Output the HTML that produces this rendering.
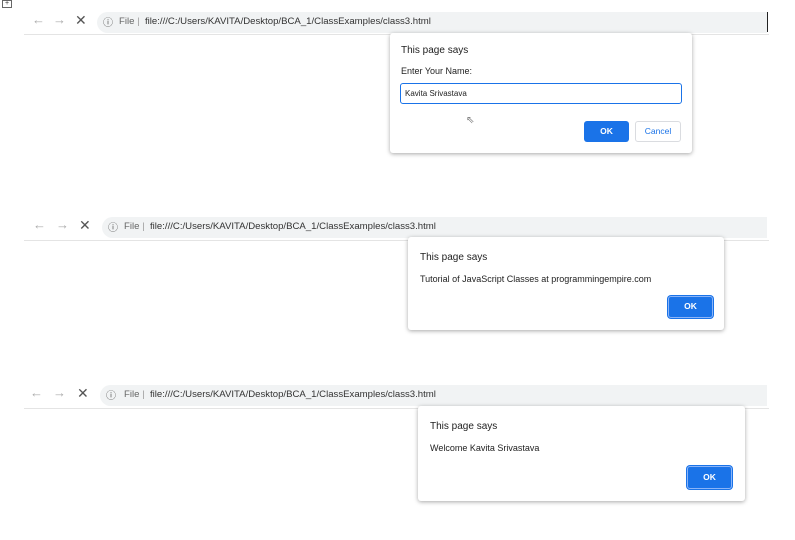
<!DOCTYPE html>
<html><head><meta charset="utf-8"><style>
*{margin:0;padding:0;box-sizing:border-box}
body{width:795px;height:540px;background:#fff;position:relative;overflow:hidden;font-family:"Liberation Sans",sans-serif;color:#333}
.a{position:absolute}
.bar{position:absolute;background:#f1f3f4;border-radius:11px 0 0 11px;height:21px}
.line{position:absolute;height:1px;background:#e4e4e4}
.ic{position:absolute;color:#aaa;font-size:13px;line-height:13px}
.x{color:#555;font-size:14px}
.url{position:absolute;font-size:9.6px;color:#333;white-space:nowrap}
.file{color:#666}
.dlg{position:absolute;background:#fff;border-radius:3px;box-shadow:0 1px 4px rgba(0,0,0,.35)}
.t{position:absolute;font-size:10px;color:#222}
.m{position:absolute;font-size:9px;color:#222}
.ok{position:absolute;background:#1a73e8;color:#fff;font-size:8.5px;font-weight:bold;text-align:center;border-radius:3px}
.ok2{border:1.5px solid #8ab4f8;box-shadow:0 0 0 1px #1a73e8}
</style></head><body>
<div class="a" style="left:2px;top:0;width:10px;height:8px;border:1px solid #666;font-size:7px;line-height:6px;text-align:center">+</div>
<div class="a" style="left:767px;top:12px;width:1px;height:20px;background:#222"></div>

<!-- bar 1 -->
<div class="bar" style="left:97px;top:12px;width:670px"></div>
<div class="line" style="left:24px;top:34px;width:745px"></div>
<div class="ic" style="left:32px;top:13px">←</div>
<div class="ic" style="left:53px;top:13px">→</div>
<div class="ic x" style="left:75px;top:14px">✕</div>
<div class="ic" style="left:103px;top:17px;font-size:10px;color:#555">ⓘ</div>
<div class="url" style="left:119px;top:16px"><span class="file">File</span> <span style="color:#999">|</span>&nbsp; file:///C:/Users/KAVITA/Desktop/BCA_1/ClassExamples/class3.html</div>

<div class="dlg" style="left:390px;top:33px;width:302px;height:120px"></div>
<div class="t" style="left:401px;top:45px">This page says</div>
<div class="m" style="left:401px;top:66px">Enter Your Name:</div>
<div class="a" style="left:400px;top:83px;width:282px;height:21px;border:1.5px solid #1a73e8;border-radius:3px;font-size:8px;padding:5px 0 0 4px;color:#222">Kavita Srivastava</div>
<div class="a" style="left:466px;top:115px;font-size:10px;color:#777">⇖</div>
<div class="ok" style="left:584px;top:121px;width:45px;height:21px;line-height:21px">OK</div>
<div class="a" style="left:635px;top:121px;width:46px;height:21px;line-height:19px;border:1px solid #dadce0;border-radius:3px;color:#1a73e8;font-size:8.5px;text-align:center">Cancel</div>

<!-- bar 2 -->
<div class="bar" style="left:102px;top:217px;width:665px"></div>
<div class="line" style="left:24px;top:240px;width:745px"></div>
<div class="ic" style="left:33px;top:218px">←</div>
<div class="ic" style="left:56px;top:218px">→</div>
<div class="ic x" style="left:79px;top:219px">✕</div>
<div class="ic" style="left:108px;top:222px;font-size:10px;color:#555">ⓘ</div>
<div class="url" style="left:124px;top:221px"><span class="file">File</span> <span style="color:#999">|</span>&nbsp; file:///C:/Users/KAVITA/Desktop/BCA_1/ClassExamples/class3.html</div>

<div class="dlg" style="left:408px;top:237px;width:316px;height:93px"></div>
<div class="t" style="left:420px;top:252px">This page says</div>
<div class="m" style="left:420px;top:274px">Tutorial of JavaScript Classes at programmingempire.com</div>
<div class="ok ok2" style="left:668px;top:296px;width:45px;height:22px;line-height:19px">OK</div>

<!-- bar 3 -->
<div class="bar" style="left:100px;top:385px;width:667px"></div>
<div class="line" style="left:24px;top:408px;width:745px"></div>
<div class="ic" style="left:30px;top:386px">←</div>
<div class="ic" style="left:53px;top:386px">→</div>
<div class="ic x" style="left:77px;top:387px">✕</div>
<div class="ic" style="left:106px;top:390px;font-size:10px;color:#555">ⓘ</div>
<div class="url" style="left:124px;top:389px"><span class="file">File</span> <span style="color:#999">|</span>&nbsp; file:///C:/Users/KAVITA/Desktop/BCA_1/ClassExamples/class3.html</div>

<div class="dlg" style="left:418px;top:406px;width:327px;height:95px"></div>
<div class="t" style="left:430px;top:421px">This page says</div>
<div class="m" style="left:430px;top:443px">Welcome Kavita Srivastava</div>
<div class="ok ok2" style="left:687px;top:466px;width:45px;height:23px;line-height:20px">OK</div>
</body></html>
